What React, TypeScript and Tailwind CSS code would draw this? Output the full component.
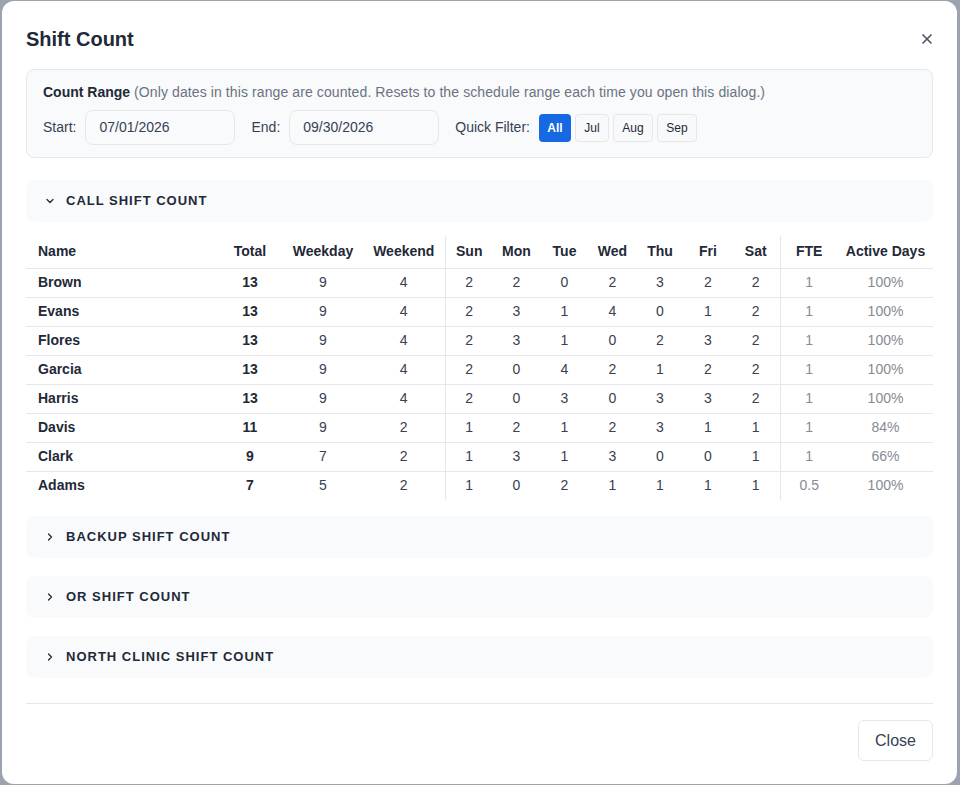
import { ChevronDown, ChevronRight, X } from 'lucide-react';

interface Row {
  name: string;
  total: number;
  weekday: number;
  weekend: number;
  days: number[];
  fte: string;
  active: string;
}

const rows: Row[] = [
  { name: 'Brown', total: 13, weekday: 9, weekend: 4, days: [2, 2, 0, 2, 3, 2, 2], fte: '1', active: '100%' },
  { name: 'Evans', total: 13, weekday: 9, weekend: 4, days: [2, 3, 1, 4, 0, 1, 2], fte: '1', active: '100%' },
  { name: 'Flores', total: 13, weekday: 9, weekend: 4, days: [2, 3, 1, 0, 2, 3, 2], fte: '1', active: '100%' },
  { name: 'Garcia', total: 13, weekday: 9, weekend: 4, days: [2, 0, 4, 2, 1, 2, 2], fte: '1', active: '100%' },
  { name: 'Harris', total: 13, weekday: 9, weekend: 4, days: [2, 0, 3, 0, 3, 3, 2], fte: '1', active: '100%' },
  { name: 'Davis', total: 11, weekday: 9, weekend: 2, days: [1, 2, 1, 2, 3, 1, 1], fte: '1', active: '84%' },
  { name: 'Clark', total: 9, weekday: 7, weekend: 2, days: [1, 3, 1, 3, 0, 0, 1], fte: '1', active: '66%' },
  { name: 'Adams', total: 7, weekday: 5, weekend: 2, days: [1, 0, 2, 1, 1, 1, 1], fte: '0.5', active: '100%' },
];

const dayNames = ['Sun', 'Mon', 'Tue', 'Wed', 'Thu', 'Fri', 'Sat'];
const dayWidths = ['w-[48px]', 'w-[47px]', 'w-[49px]', 'w-[47px]', 'w-[48px]', 'w-[48px]', 'w-[48px]'];

function SectionHeader({ title, open }: { title: string; open?: boolean }) {
  return (
    <div className="h-[42px] bg-[#f8fafc] rounded-lg flex items-center pl-[18px] gap-[10px] text-[#1f2937]">
      {open ? <ChevronDown size={12} strokeWidth={2.5} /> : <ChevronRight size={12} strokeWidth={2.5} />}
      <span className="text-[13px] font-bold uppercase tracking-[1px]">{title}</span>
    </div>
  );
}

export default function App() {
  return (
    <div className="h-[785px] bg-[#9ca3af] pl-[2px] pr-[3px] py-[1px] overflow-hidden" style={{ fontFamily: '"Liberation Sans", Arial, sans-serif' }}>
      <div className="h-[783px] bg-white rounded-xl px-6 flex flex-col">
        {/* header */}
        <div className="flex items-center justify-between pt-6 h-[52px]">
          <h1 className="text-[20px] leading-7 font-bold text-[#1f2937]">Shift Count</h1>
          <X size={16} strokeWidth={2.5} className="text-[#4b5563] mr-[-2px]" />
        </div>

        {/* count range */}
        <div className="mt-[16px] bg-[#f8fafc] border border-[#e5e7eb] rounded-lg px-4 pt-3 pb-3">
          <p className="text-[14px] leading-5 text-[#6b7280] tracking-[0.1px]">
            <span className="font-bold text-[#1f2937] tracking-normal">Count Range</span> (Only dates in this range are counted. Resets to the schedule range each time you open this dialog.)
          </p>
          <div className="mt-2 flex items-center text-[14px] text-[#374151]">
            <span>Start:</span>
            <div className="ml-[9px] w-[150px] h-[35px] border border-[#e5e7eb] bg-[#f8fafc] rounded-lg flex items-center px-[13px]">07/01/2026</div>
            <span className="ml-4">End:</span>
            <div className="ml-[9px] w-[150px] h-[35px] border border-[#e5e7eb] bg-[#f8fafc] rounded-lg flex items-center px-[13px]">09/30/2026</div>
            <span className="ml-4">Quick Filter:</span>
            <div className="ml-[9px] flex gap-1 text-[12px]">
              <button className="h-7 w-[32px] rounded bg-[#1668e3] text-white font-semibold">All</button>
              <button className="h-7 w-[34px] rounded border border-[#e5e7eb] bg-[#f8f9fa] text-[#1f2937]">Jul</button>
              <button className="h-7 w-[40px] rounded border border-[#e5e7eb] bg-[#f8f9fa] text-[#1f2937]">Aug</button>
              <button className="h-7 w-[40px] rounded border border-[#e5e7eb] bg-[#f8f9fa] text-[#1f2937]">Sep</button>
            </div>
          </div>
        </div>

        {/* call shift */}
        <div className="mt-[22px]">
          <SectionHeader title="Call Shift Count" open />
        </div>

        <table className="mt-[14px] w-full table-fixed border-collapse text-[14px]">
          <thead>
            <tr className="h-[32px] border-b border-[#e5e7eb] text-[#1f2937] font-bold">
              <th className="w-[191px] text-left pl-3 font-bold">Name</th>
              <th className="w-[66px] text-center font-bold">Total</th>
              <th className="w-[80px] text-center font-bold">Weekday</th>
              <th className="w-[82px] text-center font-bold border-r border-[#e5e7eb]">Weekend</th>
              {dayNames.map((d, i) => (
                <th key={d} className={`${dayWidths[i]} text-center font-bold ${i === 6 ? 'border-r border-[#e5e7eb]' : ''}`}>{d}</th>
              ))}
              <th className="w-[58px] text-center font-bold">FTE</th>
              <th className="text-center font-bold">Active Days</th>
            </tr>
          </thead>
          <tbody>
            {rows.map((r, idx) => (
              <tr key={r.name} className={`h-[29px] ${idx < rows.length - 1 ? 'border-b border-[#e5e7eb]' : ''}`}>
                <td className="pl-3 font-bold text-[#1f2937]">{r.name}</td>
                <td className="text-center font-bold text-[#1f2937]">{r.total}</td>
                <td className="text-center text-[#374151]">{r.weekday}</td>
                <td className="text-center text-[#374151] border-r border-[#e5e7eb]">{r.weekend}</td>
                {r.days.map((v, i) => (
                  <td key={i} className={`text-center text-[#374151] ${i === 6 ? 'border-r border-[#e5e7eb]' : ''}`}>{v}</td>
                ))}
                <td className="text-center text-[#858b94]">{r.fte}</td>
                <td className="text-center text-[#858b94]">{r.active}</td>
              </tr>
            ))}
          </tbody>
        </table>

        <div className="mt-[16px] flex flex-col gap-[18px]">
          <SectionHeader title="Backup Shift Count" />
          <SectionHeader title="OR Shift Count" />
          <SectionHeader title="North Clinic Shift Count" />
        </div>

        {/* footer */}
        <div className="mt-[25px] border-t border-[#e5e7eb] pt-[16px] flex justify-end">
          <button className="w-[75px] h-[41px] border border-[#e5e7eb] rounded-md bg-white text-[16px] text-[#374151]">Close</button>
        </div>
      </div>
    </div>
  );
}
